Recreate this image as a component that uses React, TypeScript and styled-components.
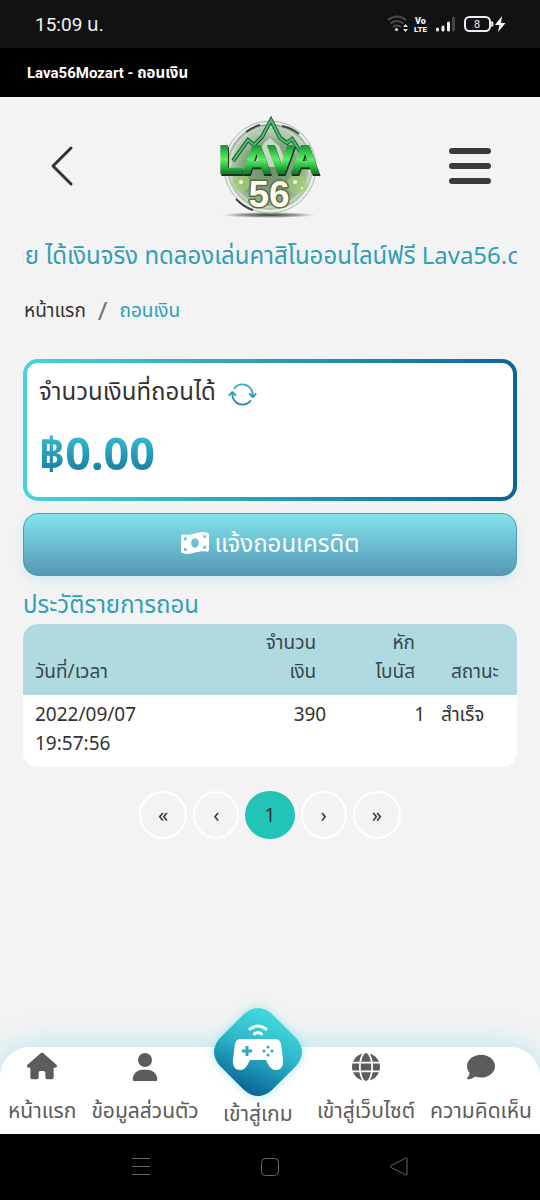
import React from "react";
import styled, { createGlobalStyle } from "styled-components";
import { FaHouse, FaUser, FaGlobe, FaComment, FaMoneyBillWave } from "react-icons/fa6";

const GlobalStyle = createGlobalStyle`
  *, *::before, *::after { box-sizing: border-box; }
  body {
    margin: 0;
    background: #f3f3f3;
    color: #333;
    font-family: "Noto Sans", "Noto Sans Thai", sans-serif;
    font-size: 19px;
    line-height: 29px;
  }
  button, a { font: inherit; color: inherit; text-decoration: none; }
  button { border: 0; background: none; padding: 0; cursor: pointer; }
  h1, h2, p, ol { margin: 0; padding: 0; font-weight: 400; }
`;

const Page = styled.div`
  min-height: 100vh;
  display: flex;
  flex-direction: column;
`;

const StatusBar = styled.div`
  height: 48px;
  padding: 0 34px 0 35px;
  display: flex;
  align-items: center;
  justify-content: space-between;
  background: #121212;
  color: #f2f2f2;
  font-family: Roboto, "Noto Sans Thai", sans-serif;
  font-size: 19px;
`;

const TitleBar = styled.div`
  height: 49px;
  padding: 2px 27px 0;
  display: flex;
  align-items: center;
  background: #000;
  color: #fff;
  font-family: Roboto, "Noto Sans Thai", sans-serif;
  font-size: 15px;
  font-weight: 700;
`;

const Header = styled.header`
  height: 138px;
  padding: 0 49px;
  display: grid;
  grid-template-columns: 1fr auto 1fr;
  align-items: center;
`;

const IconButton = styled.button<{ $end?: boolean }>`
  display: flex;
  justify-self: ${(p) => (p.$end ? "end" : "start")};
`;

const Main = styled.main`
  flex: 1;
  padding: 0 23px;
  display: flex;
  flex-direction: column;
`;

const Marquee = styled.div`
  height: 40px;
  overflow: hidden;
  white-space: nowrap;
  text-indent: -8px;
  font-size: 24px;
  line-height: 40px;
  color: #309fb6;
`;

const Breadcrumb = styled.ol`
  margin: 20px 1px 34px;
  display: flex;
  align-items: center;
  gap: 12px;
  list-style: none;
  line-height: 30px;
`;

const Crumb = styled.li<{ $active?: boolean }>`
  color: ${(p) => (p.$active ? "#2f9fb6" : "#333")};
`;

const Slash = styled.li`
  color: #6c757d;
  font-size: 26px;
`;

const BalanceCard = styled.section`
  height: 142px;
  padding: 9px 12px;
  border: 4px solid transparent;
  border-radius: 15px;
  background:
    linear-gradient(#fff, #fff) padding-box,
    linear-gradient(90deg, #48d3df, #096697) border-box;
`;

const BalanceLabel = styled.div`
  display: flex;
  align-items: center;
  gap: 12px;
  font-size: 24px;
  line-height: 36px;
  ${IconButton} { margin-top: 8px; }
`;

const Amount = styled.p`
  width: max-content;
  margin-top: 10px;
  font-size: 45px;
  line-height: 68px;
  font-weight: 700;
  color: transparent;
  background: linear-gradient(#46d5dd, #0a6597);
  background-clip: text;
`;

const WithdrawButton = styled.button`
  && {
    height: 63px;
    margin-top: 12px;
    padding-bottom: 4px;
    display: flex;
    align-items: center;
    justify-content: center;
    gap: 6px;
    border: 1px solid #4c9cb2;
    border-radius: 15px;
    background: linear-gradient(#82e4ec, #5597b7);
    box-shadow: 0 4px 10px #48d3df33;
    color: #fff;
    font-size: 24px;
  }
`;

const SectionTitle = styled.h2`
  margin-top: 9px;
  padding-bottom: 1px;
  font-size: 24px;
  line-height: 38px;
  color: #309fb6;
`;

const History = styled.table`
  width: 100%;
  table-layout: fixed;
  border-spacing: 0;
  border-radius: 15px;
  overflow: hidden;
  background: #fff;
`;

const Head = styled.th<{ $right?: boolean; $width?: string }>`
  width: ${(p) => p.$width ?? "auto"};
  padding: 4px 18px 9px 8px;
  vertical-align: bottom;
  text-align: ${(p) => (p.$right ? "right" : "left")};
  font-weight: 400;
  color: #36474d;
  background: #b0dae0;
  &:first-child { padding-left: 12px; }
`;

const Cell = styled.td<{ $right?: boolean }>`
  padding: 5px 8px 9px;
  vertical-align: top;
  text-align: ${(p) => (p.$right ? "right" : "left")};
  &:first-child { padding-left: 12px; }
`;

const Pagination = styled.nav`
  margin-top: 24px;
  display: flex;
  justify-content: center;
  gap: 6px;
`;

const PageButton = styled.button<{ $active?: boolean }>`
  && {
    height: 48px;
    min-width: 46px;
    padding: 0 17px 2px;
    border: 2px solid ${(p) => (p.$active ? "#21c4b7" : "#fff")};
    border-radius: 50%;
    background: ${(p) => (p.$active ? "#21c4b7" : "transparent")};
    font-size: 20px;
  }
`;

const TabBar = styled.nav`
  height: 87px;
  padding: 0 8px;
  display: flex;
  justify-content: space-between;
  align-items: flex-end;
  border-radius: 30px 30px 0 0;
  background: #fff;
  box-shadow: 0 0 30px #48cfe466;
  font-size: 21px;
  line-height: 30px;
  white-space: nowrap;
`;

const Tab = styled.a<{ $raised?: boolean }>`
  display: flex;
  flex-direction: column;
  align-items: center;
  gap: ${(p) => (p.$raised ? 2 : 14)}px;
  padding-bottom: ${(p) => (p.$raised ? 6 : 9)}px;
  && { color: #5c5c5c; }
`;

const SystemBar = styled.div`
  height: 66px;
  padding: 0 131px;
  display: flex;
  align-items: center;
  justify-content: space-between;
  background: #000;
`;

function StatusIcons() {
  return (
    <svg width="120" height="24" viewBox="386 12 120 24" fill="none" aria-hidden="true">
      <g stroke="#4b4b4b" strokeWidth="2">
        <path d="M388 20q9-7 18 0" />
        <path d="M390.500 23.500q6.500-5 13 0" />
        <path d="M393 27q4-3 8 0" />
      </g>
      <circle cx="396.500" cy="29.500" r="1.500" fill="#eee" />
      <path d="M403 27l2.500-3 2.500 3zM403 29l2.500 3 2.500-3z" fill="#ddd" />
      <g fill="#f2f2f2" fontFamily="Roboto, sans-serif" fontWeight="900">
        <text x="415" y="24" fontSize="9">Vo</text>
        <text x="414" y="32" fontSize="8">LTE</text>
      </g>
      <g strokeWidth="3" strokeLinecap="round">
        <path d="M437.500 30v-1M443 30v-3M448.500 30v-7" stroke="#f2f2f2" />
        <path d="M453.500 30V18" stroke="#444" />
      </g>
      <rect x="465" y="17" width="25" height="14" rx="4.500" stroke="#eee" strokeWidth="2" />
      <path d="M491.500 21.500q2 2.500 0 5" stroke="#eee" strokeWidth="2" />
      <text x="474" y="28" fill="#eee" fontFamily="Roboto, sans-serif" fontSize="11">8</text>
      <path d="M502 16l-7 9h4.500l-1.500 7 7.500-9H501z" fill="#fff" />
    </svg>
  );
}

function Logo() {
  return (
    <svg width="108" height="104" viewBox="0 0 108 104" role="img" aria-label="Lava 56">
      <defs>
        <radialGradient id="orb" cx=".5" cy=".55" r=".55">
          <stop offset="0" stopColor="#6a8f66" />
          <stop offset=".6" stopColor="#86a880" />
          <stop offset=".85" stopColor="#b9cdb6" />
          <stop offset="1" stopColor="#8d9f8d" />
        </radialGradient>
        <linearGradient id="leaf" x1="0" y1="0" x2="0" y2="1">
          <stop offset=".2" stopColor="#1f9c35" />
          <stop offset=".5" stopColor="#5bee66" />
          <stop offset=".6" stopColor="#3fd052" />
          <stop offset=".8" stopColor="#128229" />
        </linearGradient>
        <radialGradient id="shade">
          <stop offset="0" stopColor="#333" />
          <stop offset=".6" stopColor="#777" stopOpacity=".7" />
          <stop offset="1" stopColor="#999" stopOpacity="0" />
        </radialGradient>
        <filter id="drop" x="-10%" y="-10%" width="120%" height="130%">
          <feDropShadow dx="1" dy="2" stdDeviation="0.500" floodColor="#16361b" floodOpacity="1" />
        </filter>
      </defs>
      <ellipse cx="53" cy="101" rx="47" ry="3" fill="url(#shade)" />
      <circle cx="54" cy="53" r="44" fill="url(#orb)" stroke="#e8eee8" strokeWidth="2" />
      <circle cx="54" cy="53" r="46" fill="none" stroke="#aab5aa" strokeWidth="1" />
      <circle cx="54" cy="53" r="40" fill="none" stroke="#e4eee0" strokeWidth="2" opacity=".5" />
      <path d="M30 18q9-6 14-7M66 12q10 2 17 8M20 85q9 9 17 11" fill="none" stroke="#3b4a3d" strokeWidth="2" />
      <circle cx="25" cy="69" r="9" fill="#a4cf74" opacity=".65" />
      <circle cx="81" cy="70" r="10" fill="#a4cf74" opacity=".65" />
      <g fill="#f2ffe8">
        <circle cx="25" cy="68" r="2" /><circle cx="79" cy="68" r="2" /><circle cx="86" cy="74" r="1" />
      </g>
      <path d="M36 52L48 29l6-5 9 8 10 22z" fill="#d8e9d4" opacity=".8" />
      <path d="M17 47L32 26l6 5 8-8 9-17 9 18 7 5 5-4 15 23" fill="none" stroke="#195e30" strokeWidth="4" />
      <path d="M17 47L32 26l6 5 8-8 9-17 9 18 7 5 5-4 15 23" fill="none" stroke="#51bd72" strokeWidth="2" />
      <g fontFamily="Liberation Sans, Arial, sans-serif" fontWeight="700" textAnchor="middle">
        <text x="53" y="59" fontSize="39" fill="url(#leaf)" stroke="url(#leaf)" strokeWidth="2" filter="url(#drop)">LAVA</text>
        <text x="53" y="93" fontSize="37" fill="#fffdea" stroke="#5d694d" strokeWidth="3" strokeLinejoin="round" paintOrder="stroke">56</text>
      </g>
    </svg>
  );
}

function RefreshIcon() {
  return (
    <svg width="29" height="29" viewBox="0 0 512 512" fill="none" stroke="url(#sync)" strokeWidth="32" strokeLinecap="round" strokeLinejoin="round" aria-hidden="true">
      <defs>
        <linearGradient id="sync" gradientUnits="userSpaceOnUse" x1="0" y1="60" x2="0" y2="450">
          <stop offset="0" stopColor="#36b5c8" />
          <stop offset="1" stopColor="#2385ab" />
        </linearGradient>
      </defs>
      <path d="M434.670 285.590v-29.800c0-98.730-80.240-178.790-179.200-178.790a179 179 0 0 0-140.140 67.360m-38.530 82v29.800C76.800 355 157 435 256 435a180.450 180.450 0 0 0 140-66.920" />
      <path d="M22 266l54-54 56 54M490 246l-54 54-56-54" />
    </svg>
  );
}

function GameBadge() {
  return (
    <svg width="88" height="88" viewBox="0 0 88 88" aria-hidden="true" overflow="visible">
      <defs>
        <linearGradient id="badge" x1=".7" y1="0" x2=".3" y2="1">
          <stop offset=".1" stopColor="#40d7dd" />
          <stop offset=".45" stopColor="#2eb7ca" />
          <stop offset=".95" stopColor="#086394" />
        </linearGradient>
        <filter id="glow" x="-30%" y="-30%" width="160%" height="160%">
          <feDropShadow dx="0" dy="0" stdDeviation="5" floodColor="#48cfe4" floodOpacity=".5" />
        </filter>
      </defs>
      <path filter="url(#glow)" fill="url(#badge)" d="M30 6Q44-6 58 6L82 30Q94 44 82 58L58 82Q44 94 30 82L6 58Q-6 44 6 30Z" />
      <g fill="none" stroke="#fff" strokeWidth="3" strokeLinecap="round">
        <path d="M36 21q8-6 16 0" />
        <path d="M40.500 26q3.500-3 7 0" />
      </g>
      <path fill="#fff" d="M27 31h34q5 0 6 5l2 15q1 11-7 11-5 0-8-6l-2-4H36l-2 4q-3 6-8 6-8 0-7-11l2-15q1-5 6-5z" />
      <path d="M33 38v10M28 43h10" stroke="#2ba9bf" strokeWidth="3" />
      <g fill="#2ba9bf">
        <circle cx="54" cy="39" r="1.500" /><circle cx="54" cy="47" r="1.500" />
        <circle cx="50" cy="43" r="1.500" /><circle cx="58" cy="43" r="1.500" />
      </g>
    </svg>
  );
}

const pages = ["«", "‹", "1", "›", "»"];

export default function App() {
  return (
    <Page>
      <GlobalStyle />
      <StatusBar>
        <span>15:09 น.</span>
        <StatusIcons />
      </StatusBar>
      <TitleBar>Lava56Mozart - ถอนเงิน</TitleBar>
      <Header>
        <IconButton aria-label="ย้อนกลับ">
          <svg width="26" height="42" viewBox="0 0 26 42" fill="none" stroke="#333" strokeWidth="3" strokeLinecap="round" strokeLinejoin="round">
            <path d="M22 3L4 21l18 18" />
          </svg>
        </IconButton>
        <Logo />
        <IconButton $end aria-label="เมนู">
          <svg width="42" height="38" viewBox="0 0 42 38" stroke="#383b3a" strokeWidth="6" strokeLinecap="round">
            <path d="M3 4h36M3 19h36M3 34h36" />
          </svg>
        </IconButton>
      </Header>
      <Main>
        <Marquee>าย ได้เงินจริง ทดลองเล่นคาสิโนออนไลน์ฟรี Lava56.com</Marquee>
        <Breadcrumb>
          <Crumb><a href="#home">หน้าแรก</a></Crumb>
          <Slash aria-hidden="true">/</Slash>
          <Crumb $active>ถอนเงิน</Crumb>
        </Breadcrumb>
        <BalanceCard>
          <BalanceLabel>
            จำนวนเงินที่ถอนได้
            <IconButton aria-label="รีเฟรช"><RefreshIcon /></IconButton>
          </BalanceLabel>
          <Amount>฿0.00</Amount>
        </BalanceCard>
        <WithdrawButton>
          <FaMoneyBillWave size={28} />
          แจ้งถอนเครดิต
        </WithdrawButton>
        <SectionTitle>ประวัติรายการถอน</SectionTitle>
        <History>
          <thead>
            <tr>
              <Head>วันที่/เวลา</Head>
              <Head $right $width="22%">จำนวน<br />เงิน</Head>
              <Head $right $width="20%">หัก<br />โบนัส</Head>
              <Head $right $width="17%">สถานะ</Head>
            </tr>
          </thead>
          <tbody>
            <tr>
              <Cell>2022/09/07<br />19:57:56</Cell>
              <Cell $right>390</Cell>
              <Cell $right>1</Cell>
              <Cell>สำเร็จ</Cell>
            </tr>
          </tbody>
        </History>
        <Pagination>
          {pages.map((label) => (
            <PageButton key={label} $active={label === "1"}>{label}</PageButton>
          ))}
        </Pagination>
      </Main>
      <TabBar>
        <Tab href="#home"><FaHouse size={30} />หน้าแรก</Tab>
        <Tab href="#profile"><FaUser size={28} />ข้อมูลส่วนตัว</Tab>
        <Tab href="#games" $raised><GameBadge />เข้าสู่เกม</Tab>
        <Tab href="#site"><FaGlobe size={28} />เข้าสู่เว็บไซต์</Tab>
        <Tab href="#feedback"><FaComment size={28} />ความคิดเห็น</Tab>
      </TabBar>
      <SystemBar>
        <svg width="20" height="20" stroke="#666" strokeWidth="1"><path d="M1 1.500h18M1 9.500h18M1 17.500h18" /></svg>
        <svg width="20" height="20" fill="none" stroke="#666" strokeWidth="1"><rect x="1.500" y="1.500" width="17" height="17" rx="4" /></svg>
        <svg width="20" height="20" fill="none" stroke="#666" strokeWidth="1" strokeLinejoin="round"><path d="M18 1.500v16q0 1-1 .5L2 10.500q-1-1 0-2L17 1q1-.5 1 .5z" /></svg>
      </SystemBar>
    </Page>
  );
}
